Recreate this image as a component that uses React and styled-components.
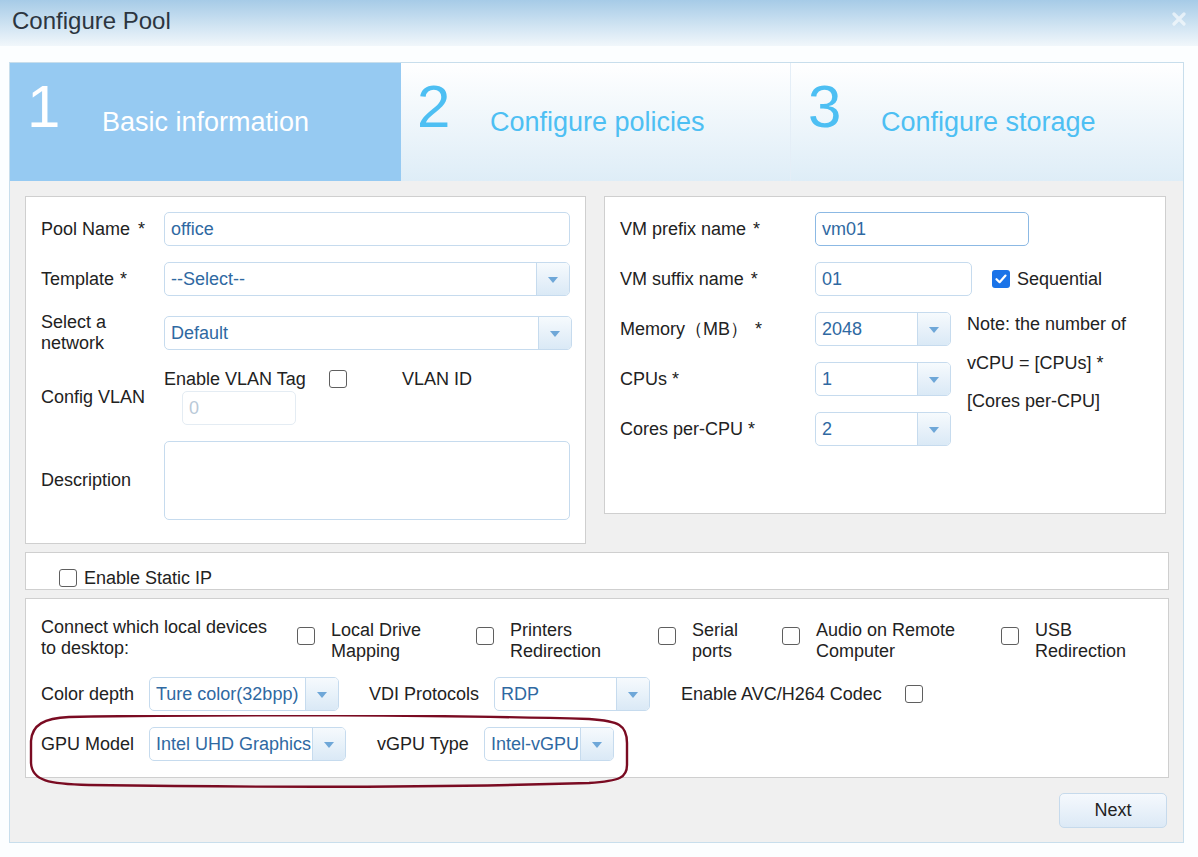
import React from 'react';
import styled, { createGlobalStyle } from 'styled-components';

const Global = createGlobalStyle`
  html, body { margin: 0; padding: 0; background: #fcfeff; }
  body { font-family: "Liberation Sans", Arial, sans-serif; font-size: 18px; color: #222; }
  * { box-sizing: border-box; }
`;

const Page = styled.div`
  width: 1198px;
  height: 857px;
  overflow: hidden;
`;

const TitleBar = styled.div`
  height: 46px;
  background: linear-gradient(#a6cbe7, #f1f7fb);
  display: flex;
  align-items: center;
  justify-content: space-between;
  padding: 0 12px 5px 12px;
`;

const Title = styled.h1`
  margin: 0;
  font-weight: normal;
  font-size: 24px;
  line-height: 1;
  color: #2c3540;
`;

const CloseIcon = styled.svg`
  width: 14px;
  height: 14px;
  margin-top: -4px;
`;

const Frame = styled.div`
  margin: 16px 0 0 9px;
  width: 1175px;
  border: 1px solid #c8deec;
`;

const Steps = styled.div`
  display: flex;
  height: 118px;
`;

const Step = styled.div`
  width: ${p => p.$w}px;
  display: flex;
  align-items: flex-start;
  padding-left: ${p => p.$pl}px;
  background: ${p => (p.$active ? '#96caf2' : 'linear-gradient(#ffffff, #deedf7)')};
  color: ${p => (p.$active ? '#ffffff' : '#4dbff3')};
  border-left: ${p => (p.$divider ? '1px solid #e4eef7' : 'none')};
`;

const StepNum = styled.div`
  font-size: 60px;
  line-height: 60px;
  margin-top: 14px;
  width: ${p => p.$w}px;
`;

const StepText = styled.div`
  font-size: 27px;
  line-height: 27px;
  margin-top: 46px;
`;

const Content = styled.div`
  background: #f0f0f0;
  padding: 15px 14px 14px 15px;
  position: relative;
`;

const TopRow = styled.div`
  display: flex;
  align-items: flex-start;
  gap: 18px;
`;

const Panel = styled.div`
  background: #fff;
  border: 1px solid #cfcfcf;
`;

const LeftPanel = styled(Panel)`
  width: 561px;
  height: 348px;
  padding: 15px 15px 0 15px;
`;

const RightPanel = styled(Panel)`
  width: 562px;
  height: 318px;
  padding: 15px 15px 0 15px;
  display: grid;
  grid-template-columns: 195px 136px 1fr;
  grid-auto-rows: 34px;
  row-gap: 16px;
  align-items: center;
`;

const FormRow = styled.div`
  display: grid;
  grid-template-columns: 123px 1fr;
  align-items: center;
  margin-top: ${p => p.$mt || 0}px;
`;

const Label = styled.div`
  line-height: 21px;
  color: #222;
  white-space: nowrap;
  width: ${p => (p.$w ? `${p.$w}px` : 'auto')};
  flex-shrink: 0;
`;

const Star = styled.span`
  margin-left: ${p => p.$ml || 5}px;
`;

const TextInput = styled.div`
  height: ${p => p.$h || 34}px;
  width: ${p => (p.$w ? `${p.$w}px` : '100%')};
  border: 1px solid ${p => (p.$focus ? '#8cb9e4' : p.$disabled ? '#e4ecf3' : '#c6dbee')};
  border-radius: 5px;
  background: #fff;
  padding: 0 6px;
  display: flex;
  align-items: center;
  color: ${p => (p.$disabled ? '#b9c9d8' : '#2f69a2')};
  margin-left: ${p => p.$ml || 0}px;
  flex-shrink: 0;
`;

const SelectBox = styled.div`
  height: 34px;
  width: ${p => (p.$w ? `${p.$w}px` : '100%')};
  margin-right: ${p => p.$mr || 0}px;
  border: 1px solid #c6dbee;
  border-radius: 5px;
  background: #fff;
  display: flex;
  overflow: hidden;
  flex-shrink: 0;
`;

const SelectValue = styled.div`
  flex: 1;
  min-width: 0;
  padding-left: 6px;
  display: flex;
  align-items: center;
  color: #2f69a2;
  white-space: nowrap;
  overflow: hidden;
`;

const SelectArrow = styled.div`
  width: 33px;
  flex-shrink: 0;
  border-left: 1px solid #c6dbee;
  background: linear-gradient(#f6fafd, #dae9f6);
  display: flex;
  align-items: center;
  justify-content: center;
`;

const Triangle = styled.span`
  width: 0;
  height: 0;
  border-left: 5px solid transparent;
  border-right: 5px solid transparent;
  border-top: 6px solid #6ea7d8;
  margin-top: 2px;
`;

const Select = ({ value, w, mr }) => (
  <SelectBox $w={w} $mr={mr}>
    <SelectValue>{value}</SelectValue>
    <SelectArrow>
      <Triangle />
    </SelectArrow>
  </SelectBox>
);

const Box = styled.span`
  width: 18px;
  height: 18px;
  flex-shrink: 0;
  border-radius: 3px;
  border: ${p => (p.$checked ? 'none' : '1.5px solid #5f5f5f')};
  background: ${p => (p.$checked ? '#1a73e8' : '#fff')};
  display: inline-flex;
  align-items: center;
  justify-content: center;
  margin-left: ${p => p.$ml || 0}px;
  margin-top: ${p => p.$mt || 0}px;
`;

const Checkbox = ({ checked, ml, mt }) => (
  <Box $checked={checked} $ml={ml} $mt={mt}>
    {checked && (
      <svg width="14" height="14" viewBox="0 0 14 14">
        <path d="M2.5 7.2 L5.6 10.2 L11.5 3.6" fill="none" stroke="#fff" strokeWidth="2.2" strokeLinecap="round" strokeLinejoin="round" />
      </svg>
    )}
  </Box>
);

const VlanBlock = styled.div`
  display: flex;
  flex-direction: column;
`;

const InlineLine = styled.div`
  display: flex;
  align-items: center;
  height: ${p => (p.$h ? `${p.$h}px` : 'auto')};
  margin-top: ${p => p.$mt || 0}px;
`;

const Spacer = styled.span`
  width: ${p => p.$w}px;
  flex-shrink: 0;
`;

const RLabel = styled(Label)`
  grid-column: 1;
`;

const RField = styled.div`
  grid-column: ${p => p.$col || '2 / 4'};
  display: flex;
  align-items: center;
`;

const Note = styled.div`
  grid-column: 3;
  grid-row: 3 / span 3;
  align-self: start;
  padding-left: 16px;
  margin-top: -7px;
  line-height: 38.5px;
  white-space: nowrap;
`;

const StaticPanel = styled(Panel)`
  margin-top: 8px;
  height: 38px;
  padding: 14px 0 0 33px;
  display: flex;
  align-items: center;
`;

const CheckText = styled.span`
  margin-left: 7px;
  line-height: 18px;
`;

const DevicesPanel = styled(Panel)`
  margin-top: 8px;
  height: 180px;
  padding: 18px 15px 0 15px;
`;

const DevRow = styled.div`
  display: flex;
  align-items: ${p => p.$align || 'center'};
  margin-top: ${p => p.$mt || 0}px;
`;

const Option = styled.div`
  display: flex;
  align-items: flex-start;
  width: ${p => (p.$w ? `${p.$w}px` : 'auto')};
  margin-top: 3px;
  flex-shrink: 0;
`;

const OptionText = styled.div`
  margin-left: 16px;
  line-height: 21px;
`;

const Actions = styled.div`
  display: flex;
  justify-content: flex-end;
  margin-top: 15px;
  padding-right: 2px;
`;

const Button = styled.div`
  width: 108px;
  height: 35px;
  border: 1px solid #c6daec;
  border-radius: 5px;
  background: linear-gradient(#f5f9fd, #dce9f6);
  display: flex;
  align-items: center;
  justify-content: center;
  color: #222;
`;

const Annotation = styled.svg`
  position: absolute;
  left: 19px;
  top: 534px;
  width: 602px;
  height: 74px;
  pointer-events: none;
`;

const options = [
  { w: 179, lines: ['Local Drive', 'Mapping'] },
  { w: 182, lines: ['Printers', 'Redirection'] },
  { w: 124, lines: ['Serial', 'ports'] },
  { w: 219, lines: ['Audio on Remote', 'Computer'] },
  { w: 0, lines: ['USB', 'Redirection'] },
];

export default function App() {
  return (
    <Page>
      <Global />
      <TitleBar>
        <Title>Configure Pool</Title>
        <CloseIcon viewBox="0 0 14 14">
          <path d="M2 2 L12 12 M12 2 L2 12" stroke="rgba(255,255,255,0.6)" strokeWidth="3.2" strokeLinecap="round" />
        </CloseIcon>
      </TitleBar>
      <Frame>
        <Steps>
          <Step $w={391} $pl={17} $active>
            <StepNum $w={75}>1</StepNum>
            <StepText>Basic information</StepText>
          </Step>
          <Step $w={389} $pl={16}>
            <StepNum $w={73}>2</StepNum>
            <StepText>Configure policies</StepText>
          </Step>
          <Step $w={393} $pl={17} $divider>
            <StepNum $w={73}>3</StepNum>
            <StepText>Configure storage</StepText>
          </Step>
        </Steps>
        <Content>
          <TopRow>
            <LeftPanel>
              <FormRow>
                <Label>Pool Name<Star $ml={8}>*</Star></Label>
                <TextInput>office</TextInput>
              </FormRow>
              <FormRow $mt={16}>
                <Label>Template<Star $ml={6}>*</Star></Label>
                <Select value="--Select--" />
              </FormRow>
              <FormRow $mt={16}>
                <Label>Select a<br />network</Label>
                <Select value="Default" w={408} />
              </FormRow>
              <FormRow $mt={16}>
                <Label>Config VLAN</Label>
                <VlanBlock>
                  <InlineLine $h={18}>
                    <Label $w={165}>Enable VLAN Tag</Label>
                    <Checkbox />
                    <Spacer $w={55} />
                    <Label>VLAN ID</Label>
                  </InlineLine>
                  <InlineLine $mt={3}>
                    <TextInput $w={114} $ml={18} $disabled>0</TextInput>
                  </InlineLine>
                </VlanBlock>
              </FormRow>
              <FormRow $mt={16}>
                <Label>Description</Label>
                <TextInput $h={79} />
              </FormRow>
            </LeftPanel>
            <RightPanel>
              <RLabel>VM prefix name<Star $ml={7}>*</Star></RLabel>
              <RField>
                <TextInput $w={214} $focus>vm01</TextInput>
              </RField>
              <RLabel>VM suffix name<Star $ml={7}>*</Star></RLabel>
              <RField>
                <TextInput $w={157}>01</TextInput>
                <Checkbox checked ml={20} />
                <CheckText>Sequential</CheckText>
              </RField>
              <RLabel>Memory（MB）<Star $ml={7}>*</Star></RLabel>
              <RField $col="2">
                <Select value="2048" w={136} />
              </RField>
              <Note>
                Note: the number of<br />vCPU = [CPUs] *<br />[Cores per-CPU]
              </Note>
              <RLabel>CPUs<Star>*</Star></RLabel>
              <RField $col="2">
                <Select value="1" w={136} />
              </RField>
              <RLabel>Cores per-CPU<Star>*</Star></RLabel>
              <RField $col="2">
                <Select value="2" w={136} />
              </RField>
            </RightPanel>
          </TopRow>
          <StaticPanel>
            <Checkbox />
            <CheckText>Enable Static IP</CheckText>
          </StaticPanel>
          <DevicesPanel>
            <DevRow $align="flex-start">
              <Label $w={256}>Connect which local devices<br />to desktop:</Label>
              {options.map((o, i) => (
                <Option key={i} $w={o.w}>
                  <Checkbox mt={7} />
                  <OptionText>{o.lines[0]}<br />{o.lines[1]}</OptionText>
                </Option>
              ))}
            </DevRow>
            <DevRow $mt={15}>
              <Label $w={108}>Color depth</Label>
              <Select value="Ture color(32bpp)" w={190} mr={30} />
              <Label $w={125}>VDI Protocols</Label>
              <Select value="RDP" w={156} mr={31} />
              <Label $w={224}>Enable AVC/H264 Codec</Label>
              <Checkbox />
            </DevRow>
            <DevRow $mt={16}>
              <Label $w={108}>GPU Model</Label>
              <Select value="Intel UHD Graphics" w={197} mr={31} />
              <Label $w={107}>vGPU Type</Label>
              <Select value="Intel-vGPU" w={130} />
            </DevRow>
          </DevicesPanel>
          <Actions>
            <Button>Next</Button>
          </Actions>
          <Annotation viewBox="0 0 602 74">
            <path
              d="M40 2 C 200 -1, 420 0, 560 4 C 590 6, 598 10, 598 28 L 598 50 C 598 62, 592 66, 560 68 C 400 73, 200 72, 60 70 C 20 69, 3 66, 2 48 L 2 26 C 3 10, 15 3, 40 2 Z"
              fill="none"
              stroke="#7a0b22"
              strokeWidth="2.4"
            />
          </Annotation>
        </Content>
      </Frame>
    </Page>
  );
}
